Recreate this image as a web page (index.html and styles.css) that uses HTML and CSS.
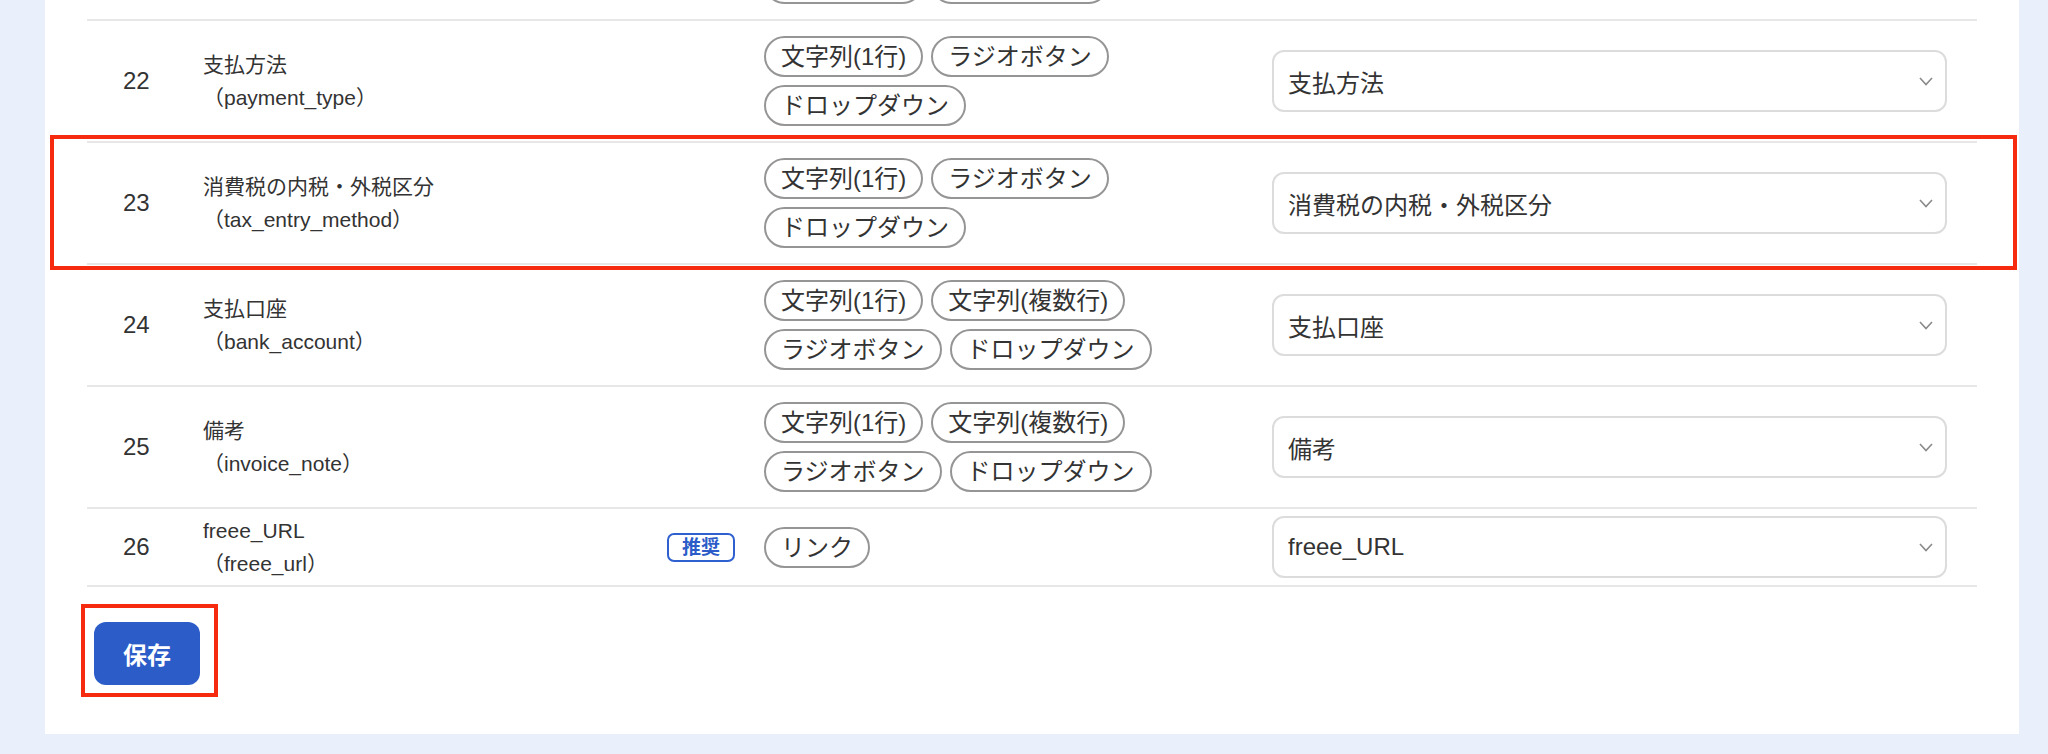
FILE: index.html
```html
<!DOCTYPE html>
<html lang="ja">
<head>
<meta charset="utf-8">
<title>項目マッピング</title>
<link rel="stylesheet" href="styles.css">
</head>
<body>
<main class="panel">
  <div class="table">
    <div class="row">
      <div class="num"></div>
      <div class="label"></div>
      <div class="chips">
        <span class="chip">文字列(複数行)</span><span class="chip">ドロップダウン</span>
        <span class="chip">文字列(1行)</span><span class="chip">ラジオボタン</span>
      </div>
      <div class="select-slot"></div>
    </div>

    <div class="row">
      <div class="num">22</div>
      <div class="label"><div class="label-text">支払方法<br>（payment_type）</div></div>
      <div class="chips">
        <span class="chip">文字列(1行)</span><span class="chip">ラジオボタン</span>
        <span class="chip">ドロップダウン</span>
      </div>
      <div class="select"><span>支払方法</span><svg class="chev" width="14" height="9" viewBox="0 0 14 9"><polyline points="1,1 7,7.5 13,1" fill="none" stroke="#8a8a8a" stroke-width="1.6"/></svg></div>
    </div>

    <div class="row highlighted">
      <div class="num">23</div>
      <div class="label"><div class="label-text">消費税の内税・外税区分<br>（tax_entry_method）</div></div>
      <div class="chips">
        <span class="chip">文字列(1行)</span><span class="chip">ラジオボタン</span>
        <span class="chip">ドロップダウン</span>
      </div>
      <div class="select"><span>消費税の内税・外税区分</span><svg class="chev" width="14" height="9" viewBox="0 0 14 9"><polyline points="1,1 7,7.5 13,1" fill="none" stroke="#8a8a8a" stroke-width="1.6"/></svg></div>
      <div class="mark mark-row"></div>
    </div>

    <div class="row">
      <div class="num">24</div>
      <div class="label"><div class="label-text">支払口座<br>（bank_account）</div></div>
      <div class="chips">
        <span class="chip">文字列(1行)</span><span class="chip">文字列(複数行)</span>
        <span class="chip">ラジオボタン</span><span class="chip">ドロップダウン</span>
      </div>
      <div class="select"><span>支払口座</span><svg class="chev" width="14" height="9" viewBox="0 0 14 9"><polyline points="1,1 7,7.5 13,1" fill="none" stroke="#8a8a8a" stroke-width="1.6"/></svg></div>
    </div>

    <div class="row">
      <div class="num">25</div>
      <div class="label"><div class="label-text">備考<br>（invoice_note）</div></div>
      <div class="chips">
        <span class="chip">文字列(1行)</span><span class="chip">文字列(複数行)</span>
        <span class="chip">ラジオボタン</span><span class="chip">ドロップダウン</span>
      </div>
      <div class="select"><span>備考</span><svg class="chev" width="14" height="9" viewBox="0 0 14 9"><polyline points="1,1 7,7.5 13,1" fill="none" stroke="#8a8a8a" stroke-width="1.6"/></svg></div>
    </div>

    <div class="row short last">
      <div class="num">26</div>
      <div class="label"><div class="label-text">freee_URL<br>（freee_url）</div><span class="badge">推奨</span></div>
      <div class="chips">
        <span class="chip">リンク</span>
      </div>
      <div class="select"><span>freee_URL</span><svg class="chev" width="14" height="9" viewBox="0 0 14 9"><polyline points="1,1 7,7.5 13,1" fill="none" stroke="#8a8a8a" stroke-width="1.6"/></svg></div>
    </div>
  </div>

  <div class="actions">
    <button class="save" type="button">保存</button>
    <div class="mark mark-btn"></div>
  </div>
</main>
</body>
</html>
```

FILE: styles.css
```css
* {
  box-sizing: border-box;
}

html, body {
  margin: 0;
  padding: 0;
}

body {
  background: #e9f0fc;
  font-family: "Liberation Sans", "Noto Sans CJK JP", sans-serif;
  color: #333333;
  overflow: hidden;
}

.panel {
  background: #ffffff;
  margin: -103px 29px 20px 45px;
  padding: 0 42px 49px 42px;
}

.table {
  border-bottom: 2px solid #e7e7e7;
}

.row {
  position: relative;
  display: grid;
  grid-template-columns: 115px 562px 508px 1fr;
  align-items: center;
  min-height: 122px;
  padding-right: 30px;
  border-top: 2px solid #e7e7e7;
}

.row.short {
  min-height: 78px;
}

.num {
  padding-left: 36px;
  font-size: 24px;
  color: #333333;
}

.label {
  display: flex;
  align-items: center;
  justify-content: space-between;
  padding-left: 1px;
  padding-right: 29px;
}

.label-text {
  font-size: 21px;
  line-height: 33px;
  color: #333333;
}

.badge {
  display: inline-block;
  height: 29px;
  line-height: 25px;
  padding: 0 13px;
  border: 2px solid #2f60d0;
  border-radius: 7px;
  color: #2b5cc8;
  font-size: 19px;
  font-weight: bold;
}

.chips {
  display: flex;
  flex-wrap: wrap;
  gap: 8px;
  padding-right: 40px;
}

.chip {
  display: inline-block;
  height: 41px;
  line-height: 37px;
  padding: 0 15px;
  border: 2px solid #959595;
  border-radius: 21px;
  font-size: 24px;
  color: #333333;
  white-space: nowrap;
}

.select {
  display: flex;
  align-items: center;
  justify-content: space-between;
  height: 62px;
  padding: 0 12px 0 14px;
  border: 2px solid #dcdcdc;
  border-radius: 12px;
  background: #ffffff;
  font-size: 24px;
  color: #333333;
}

.chev {
  display: block;
}

.actions {
  position: relative;
  padding: 35px 0 0 7px;
}

.save {
  display: block;
  width: 106px;
  height: 63px;
  border: none;
  border-radius: 12px;
  background: #2b5cc8;
  color: #ffffff;
  font-family: "Liberation Sans", "Noto Sans CJK JP", sans-serif;
  font-size: 24px;
  font-weight: bold;
  padding: 0;
}

.mark {
  position: absolute;
  border: 4px solid #f52a0f;
  pointer-events: none;
}

.mark-row {
  top: -8px;
  left: -37px;
  right: -40px;
  bottom: -7px;
}

.mark-btn {
  top: 17px;
  left: -6px;
  width: 137px;
  height: 93px;
}
```
